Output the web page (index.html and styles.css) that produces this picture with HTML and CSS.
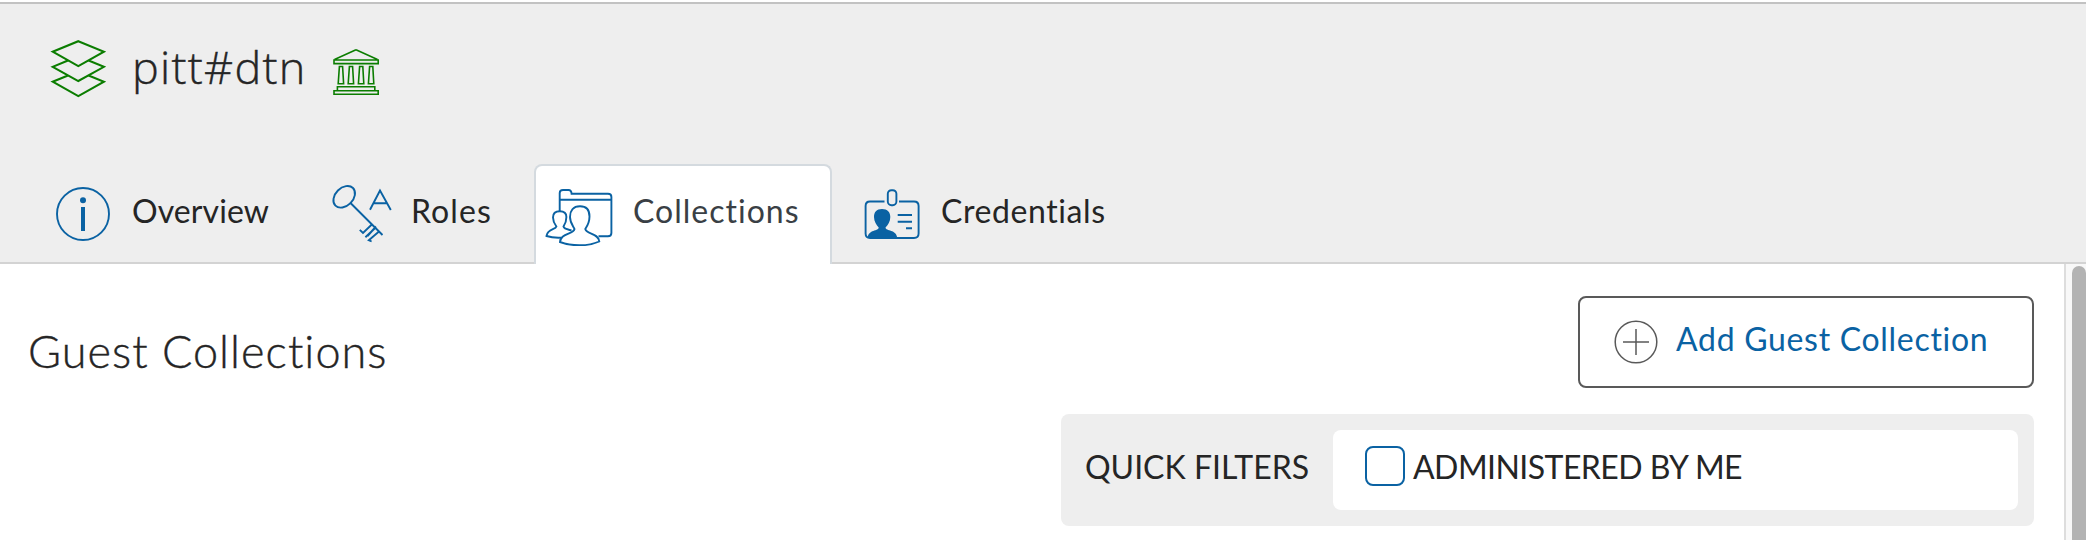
FILE: index.html
```html
<!DOCTYPE html>
<html lang="en">
<head>
<meta charset="utf-8">
<title>pitt#dtn - Collections</title>
<link rel="stylesheet" href="styles.css">
</head>
<body>
<header class="header">
  <div class="title-row">
    <svg class="icon-layers" viewBox="50 38 56 60" width="56" height="60">
      <path d="M78.3 41.2 104 51.7 78.3 66 52.7 51.7ZM68 60.5 52.7 66.8 78.3 81 104 66.8 88.6 60.5M68 75.5 52.7 81.7 78.3 96 104 81.7 88.6 75.5"/>
    </svg>
    <h1 class="title">pitt#dtn</h1>
    <svg class="icon-bank" viewBox="332 48 48 48" width="48" height="48">
      <path d="M356 49.8 334.5 59.4M356 49.8 377.5 59.4M334 60H378.2V63.6H334ZM339.4 66.5H342.6L343.6 83.8H338.2ZM349.4 66.5H352.6L353.6 83.8H348.2ZM359.6 66.5H362.8L363.8 83.8H358.4ZM369.6 66.5H372.8L373.8 83.8H368.4ZM337.4 90.5V86.8H374.8V90.5M334 90.8H378.2V94.2H334Z"/>
    </svg>
  </div>
  <nav class="tabs">
    <a class="tab tab-overview">
      <svg viewBox="54 182 58 64" width="58" height="64">
        <circle cx="83" cy="214" r="26"/>
        <circle class="fill" cx="83" cy="200.2" r="3"/>
        <path class="fill" d="M81 207H85V231H81Z"/>
      </svg>
      <span class="label">Overview</span>
    </a>
    <a class="tab tab-roles">
      <svg viewBox="331 182 62 64" width="62" height="64">
        <ellipse cx="344.2" cy="196.8" rx="12.4" ry="8.9" transform="rotate(-45 344.2 196.8)"/>
        <path d="M350 202.5 382.5 235M370 209.8 380 190.5 390.8 210M373.5 203.3H386.5M371.8 224.5 363 233 359.8 229.8M375.2 228 365.4 237.2M379 231.5 368.8 240.2 371.6 241.5M376 226.5 367.5 236"/>
      </svg>
      <span class="label">Roles</span>
    </a>
    <a class="tab tab-collections active">
      <svg viewBox="543 182 72 64" width="72" height="64">
        <path d="M559.7 211V193Q559.7 190 563 190H568.5Q571.4 190 571.6 193.8H608Q611.4 193.8 611.4 197V233Q611.4 236.3 608 236.3H598.5M559.7 199.8H611.4"/>
        <path class="paper" d="M580 206.3C573 206.3 570 211 570 217C570 223 573.5 226.5 574.5 229C573.5 234.5 560.5 233 560 242C572 246.5 588 246.5 599.3 241.5C598.5 233 586.5 234.5 585.3 229C587 226.5 589.5 222 589.5 216.5C589.5 210 587 206.3 580 206.3Z"/>
        <path d="M571.5 230.5C568 229.5 564 229 563.5 226.5C565.5 223.5 566.4 220 566.4 217C566.4 213 563.8 211.3 559.8 211.3C555.5 211.3 553 213.5 553 217.5C553 221 554.5 224 556.4 226.5C555.5 230 547.5 228.5 546.5 236C551 237.5 556.5 238 562.3 237.6"/>
      </svg>
      <span class="label">Collections</span>
    </a>
    <a class="tab tab-credentials">
      <svg viewBox="862 182 60 64" width="60" height="64">
        <path d="M884.5 201.5H870Q865.6 201.5 865.6 206V233.5Q865.6 238 870 238H914Q918.6 238 918.6 233.5V206Q918.6 201.5 914 201.5H899"/>
        <rect x="887.8" y="190.2" width="8.6" height="15" rx="3.6"/>
        <path d="M897.7 215H912M897.7 221.7H912M906 228.3H912"/>
        <path class="fill" d="M882 209C876.5 209 874 212 874 217C874 221.5 876.5 225 878.7 227.5C878.5 231.5 868.5 229 867.5 238H897.3C896.5 229 885.8 231.5 885.5 227.5C888 225 890.3 221.5 890.3 217C890.3 212 887.5 209 882 209Z"/>
      </svg>
      <span class="label">Credentials</span>
    </a>
  </nav>
</header>
<main class="body">
  <section class="content">
    <div class="heading-row">
      <h2 class="heading">Guest Collections</h2>
      <button class="add-button">
        <svg viewBox="0 0 44 44" width="44" height="44">
          <circle cx="22" cy="22" r="20.8"/>
          <path d="M9 22H35M22 9V35"/>
        </svg>
        <span class="add-label">Add Guest Collection</span>
      </button>
    </div>
    <div class="filters">
      <span class="filters-title">QUICK FILTERS</span>
      <label class="filter-option">
        <span class="checkbox"></span>
        <span class="option-label">ADMINISTERED BY ME</span>
      </label>
    </div>
  </section>
  <div class="scrollbar"><div class="thumb"></div></div>
</main>
</body>
</html>
```
FILE: styles.css
```css
* { box-sizing: border-box; }

body {
  margin: 0;
  height: 540px;
  overflow: hidden;
  display: flex;
  flex-direction: column;
  background: #fff;
  color: #252525;
  font-family: Lato, "Open Sans", sans-serif;
  font-size: 32px;
  line-height: 40px;
  font-variant-ligatures: none;
  white-space: nowrap;
}

svg { flex: none; fill: none; stroke-width: 2; }

.header {
  flex: none;
  display: flex;
  flex-direction: column;
  justify-content: space-between;
  margin-top: 2px;
  height: 262px;
  background: #eee;
  border-top: 2px solid #c2c2c2;
  border-bottom: 2px solid #d3d3d3;
}

.title-row {
  display: flex;
  align-items: flex-start;
  padding: 34px 0 0 50px;
}

.icon-layers, .icon-bank { stroke: #0b7d00; }
.icon-bank { margin-top: 10px; stroke-width: 1.6; }

.title {
  width: 200px;
  margin: 3px 0 0 26px;
  font-family: "Open Sans", sans-serif;
  font-size: 45px;
  line-height: 52px;
  font-weight: 300;
  letter-spacing: 1.25px;
  -webkit-text-stroke: 0.4px #252525;
}

.tabs {
  display: flex;
  padding-left: 24px;
  margin-bottom: -2px;
}

.tab {
  display: flex;
  align-items: center;
  height: 100px;
  padding-bottom: 2px;
  border: 2px solid transparent;
  border-bottom: 0;
  border-radius: 8px 8px 0 0;
}

.tab svg { stroke: #0a62a3; stroke-width: 1.9; }
.tab .fill { fill: #0a62a3; stroke: none; }
.tab .paper { fill: #fff; }
.label { padding-bottom: 7px; letter-spacing: 0.6px; }

.tab-overview { width: 278px; padding-left: 28px; gap: 20px; }
.tab-overview .label { letter-spacing: 0.1px; }
.tab-roles { width: 232px; padding-left: 27px; gap: 18px; }
.tab-roles .label { letter-spacing: 1.1px; }
.tab-collections { width: 298px; padding-left: 7px; gap: 18px; }
.tab-collections .label { letter-spacing: 1px; }
.tab-credentials { width: 300px; padding-left: 28px; gap: 19px; }

.active {
  background: #fff;
  border-color: #d4dadf;
  color: #3a3f45;
}

.body { display: flex; flex: 1; min-height: 0; }
.content { flex: 1; padding: 32px 30px 0 28px; }

.heading-row {
  display: flex;
  justify-content: space-between;
  align-items: center;
}

.heading {
  margin: 0;
  padding-top: 18px;
  font-size: 45px;
  line-height: 54px;
  font-weight: 300;
  letter-spacing: 1.05px;
  -webkit-text-stroke: 0.4px #252525;
}

.add-button {
  display: flex;
  align-items: center;
  gap: 18px;
  width: 456px;
  height: 92px;
  padding: 0 0 0 34px;
  background: #fff;
  border: 2px solid #595959;
  border-radius: 8px;
  color: #0a62a3;
  font: inherit;
}

.add-button svg { stroke: #595959; stroke-width: 1.5; }
.add-label { padding-bottom: 7px; letter-spacing: 0.7px; }

.filters {
  display: flex;
  align-items: center;
  width: 973px;
  height: 112px;
  margin: 26px 0 0 auto;
  padding: 16px 16px 16px 24px;
  background: #eee;
  border-radius: 8px;
}

.filters-title { width: 248px; padding-bottom: 6px; }

.filter-option {
  display: flex;
  align-items: center;
  gap: 8px;
  flex: 1;
  height: 80px;
  padding: 0 0 8px 32px;
  background: #fff;
  border-radius: 8px;
}

.option-label { padding-top: 2px; letter-spacing: -0.55px; }

.checkbox {
  width: 40px;
  height: 40px;
  border: 2px solid #0a62a3;
  border-radius: 8px;
}

.scrollbar {
  display: flex;
  width: 22px;
  padding: 2px 0 0 6px;
  background: #f8f8f8;
  border-left: 2px solid #ddd;
}

.thumb {
  width: 16px;
  background: #b3b3b3;
  border-radius: 8px 8px 0 0;
}
```
